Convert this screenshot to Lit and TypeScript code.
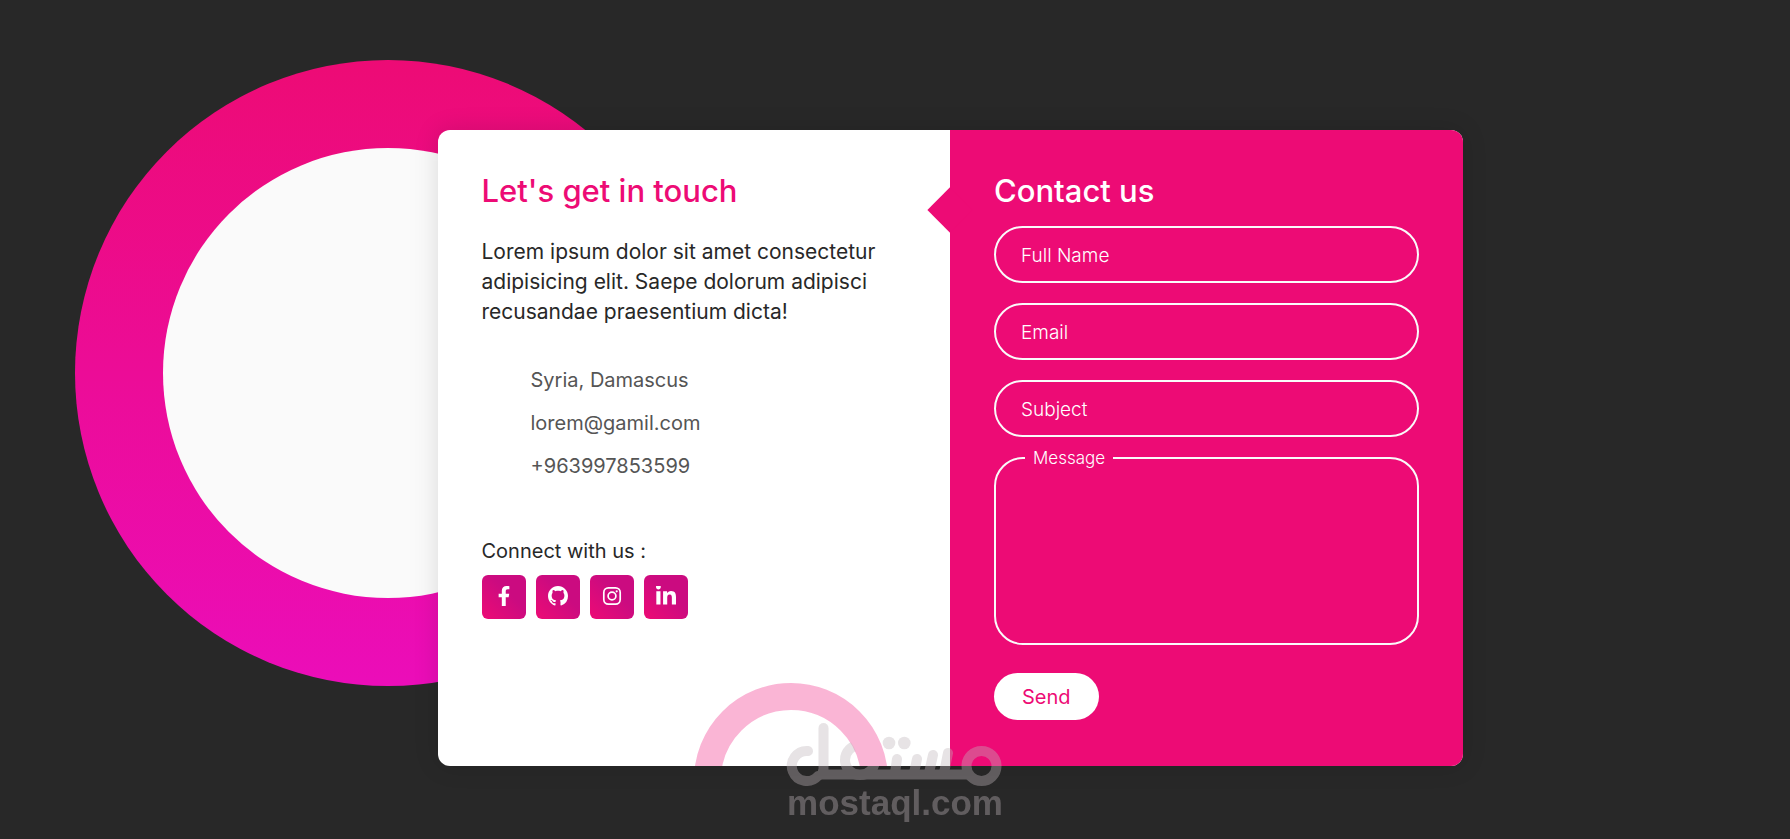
import { LitElement, html, css, svg } from "lit";
import { customElement } from "lit/decorators.js";

const contacts = ["Syria, Damascus", "lorem@gamil.com", "+963997853599"];

const fields = [
  { id: "name", type: "text", label: "Full Name" },
  { id: "email", type: "email", label: "Email" },
  { id: "subject", type: "text", label: "Subject" },
];

const socials = [
  {
    name: "Facebook",
    box: "-96 0 512 512",
    art: svg`<path fill="currentColor" d="M279.14 288l14.22-92.66h-88.91v-60.13c0-25.35 12.42-50.06 52.24-50.06h40.42V6.26S260.43 0 225.36 0c-73.22 0-121.08 44.38-121.08 124.72v70.62H22.89V288h81.39v224h100.17V288z"/>`,
  },
  {
    name: "GitHub",
    box: "0 0 16 16",
    art: svg`<path fill="currentColor" d="M8 0C3.58 0 0 3.58 0 8c0 3.54 2.29 6.53 5.47 7.59.4.07.55-.17.55-.38 0-.19-.01-.82-.01-1.49-2.01.37-2.53-.49-2.69-.94-.09-.23-.48-.94-.82-1.13-.28-.15-.68-.52-.01-.53.63-.01 1.08.58 1.23.82.72 1.21 1.87.87 2.33.66.07-.52.28-.87.51-1.07-1.78-.2-3.64-.89-3.64-3.95 0-.87.31-1.59.82-2.15-.08-.2-.36-1.02.08-2.12 0 0 .67-.21 2.2.82.64-.18 1.32-.27 2-.27.68 0 1.36.09 2 .27 1.53-1.04 2.2-.82 2.2-.82.44 1.1.16 1.92.08 2.12.51.56.82 1.27.82 2.15 0 3.07-1.87 3.75-3.65 3.95.29.25.54.73.54 1.48 0 1.07-.01 1.93-.01 2.2 0 .21.15.46.55.38A8.013 8.013 0 0016 8c0-4.42-3.58-8-8-8z"/>`,
  },
  {
    name: "Instagram",
    box: "0 0 20 20",
    art: svg`<rect x="1.8" y="1.8" width="16.4" height="16.4" rx="4.6" fill="none" stroke="currentColor" stroke-width="1.7"/><circle cx="10" cy="10" r="3.9" fill="none" stroke="currentColor" stroke-width="1.7"/><circle cx="14.7" cy="5.3" r="1.1" fill="currentColor"/>`,
  },
  {
    name: "LinkedIn",
    box: "0 0 448 448",
    art: svg`<path fill="currentColor" d="M100.28 416H7.4V116.9h92.88zM53.79 76.1C24.09 76.1 0 51.5 0 21.8a53.79 53.79 0 0 1 107.58 0c0 29.7-24.1 54.3-53.79 54.3zM447.9 416h-92.68V270.4c0-34.7-.7-79.2-48.29-79.2-48.29 0-55.69 37.7-55.69 76.7V416h-92.78V116.9h89.08v40.8h1.3c12.4-23.5 42.69-48.3 87.88-48.3 94 0 111.28 61.9 111.28 142.3V416z"/>`,
  },
];

@customElement("app-root")
export class AppRoot extends LitElement {
  static styles = css`
    :host {
      display: block;
      --pink: #ed0b75;
      --soft: #fafafa;
      font-family: Inter, sans-serif;
      color: #282828;
    }
    * {
      box-sizing: border-box;
      margin: 0;
      padding: 0;
    }
    .stage {
      position: relative;
      overflow: hidden;
      display: flex;
      align-items: center;
      justify-content: center;
      min-height: 100vh;
      padding: 57px 0 0 110px;
      background: #282828;
    }
    .halo {
      position: absolute;
      left: calc(50% - 820px);
      top: 60px;
      width: 626px;
      height: 626px;
      border-radius: 50%;
      background: linear-gradient(to bottom, #ed0b75, #eb0db9);
    }
    .halo::after {
      content: "";
      position: absolute;
      inset: 88px;
      border-radius: 50%;
      background: var(--soft);
    }
    .card {
      position: relative;
      display: grid;
      grid-template-columns: 1fr 1fr;
      width: 100%;
      max-width: 1025px;
      border-radius: 12px;
      background: #fff;
      box-shadow: 0 0 25px 1px rgba(0, 0, 0, 0.12);
      overflow: hidden;
    }
    .info {
      position: relative;
      padding: 44px;
      overflow: hidden;
    }
    .ring {
      position: absolute;
      right: 62px;
      bottom: -111px;
      width: 194px;
      height: 194px;
      border: 27px solid var(--pink);
      border-radius: 50%;
      opacity: 0.3;
    }
    .title {
      font-size: 31px;
      line-height: 34px;
      font-weight: 500;
    }
    .info .title {
      color: var(--pink);
    }
    .intro {
      margin-top: 29px;
      font-size: 21px;
      line-height: 30px;
      white-space: nowrap;
    }
    .contacts {
      list-style: none;
      margin-top: 32px;
      padding-left: 49px;
      font-size: 20px;
      line-height: 43px;
      color: #555;
    }
    .connect {
      margin-top: 48px;
      font-size: 20px;
      line-height: 30px;
      font-weight: 400;
    }
    .socials {
      display: flex;
      gap: 10px;
      margin-top: 9px;
    }
    .social {
      display: flex;
      align-items: center;
      justify-content: center;
      width: 44px;
      height: 44px;
      padding-bottom: 2px;
      border-radius: 6px;
      color: #fff;
      background: linear-gradient(45deg, #ed0b75, #cb0b80 60%);
    }
    .icon {
      width: 20px;
      height: 20px;
    }
    .form-side {
      position: relative;
      background: var(--pink);
    }
    .form-side::before {
      content: "";
      position: absolute;
      left: -16px;
      top: 64px;
      width: 32px;
      height: 32px;
      background: var(--pink);
      transform: rotate(45deg);
    }
    .form {
      display: flex;
      flex-direction: column;
      align-items: stretch;
      padding: 44px 44px 46px;
      color: #fff;
    }
    .fields {
      display: flex;
      flex-direction: column;
      gap: 20px;
      margin-top: 18px;
    }
    .field {
      position: relative;
      display: flex;
    }
    .control {
      width: 100%;
      height: 57px;
      padding: 0 25px;
      border: 2px solid var(--soft);
      border-radius: 29px;
      outline: none;
      background: none;
      color: #fff;
      font: 400 19px/24px Inter, sans-serif;
    }
    .area {
      height: 188px;
      padding: 16px 25px;
      resize: none;
      overflow: auto;
    }
    .label {
      position: absolute;
      left: 27px;
      top: 18px;
      font-size: 19px;
      font-weight: 300;
      line-height: 24px;
      pointer-events: none;
    }
    .label.raised {
      left: 31px;
      top: -11px;
      padding: 0 8px;
      font-size: 17px;
      background: var(--pink);
    }
    .send {
      align-self: flex-start;
      height: 47px;
      margin-top: 28px;
      padding: 0 28px;
      border: 0;
      border-radius: 24px;
      background: #fff;
      color: var(--pink);
      font: 400 20px/24px Inter, sans-serif;
      cursor: pointer;
    }
    .watermark {
      position: absolute;
      left: calc(50% - 115px);
      bottom: 0;
      width: 230px;
      height: 124px;
      pointer-events: none;
    }
    .wordmark {
      font: 700 35px "Liberation Sans", sans-serif;
    }
  `;

  render() {
    return html`
      <main class="stage">
        <div class="halo"></div>
        <div class="card">
          <section class="info">
            <div class="ring"></div>
            <h3 class="title">Let's get in touch</h3>
            <p class="intro">
              Lorem ipsum dolor sit amet consectetur<br />adipisicing elit. Saepe
              dolorum adipisci<br />recusandae praesentium dicta!
            </p>
            <ul class="contacts">
              ${contacts.map((c) => html`<li>${c}</li>`)}
            </ul>
            <p class="connect">Connect with us :</p>
            <nav class="socials">
              ${socials.map(
                (s) => html`<a class="social" href="#" aria-label=${s.name}
                  ><svg class="icon" viewBox=${s.box}>${s.art}</svg></a
                >`
              )}
            </nav>
          </section>
          <section class="form-side">
            <form class="form">
              <h3 class="title">Contact us</h3>
              <div class="fields">
                ${fields.map(
                  (f) => html`<div class="field">
                    <input class="control" id=${f.id} type=${f.type} />
                    <label class="label" for=${f.id}>${f.label}</label>
                  </div>`
                )}
                <div class="field">
                  <textarea class="control area" id="message"></textarea>
                  <label class="label raised" for="message">Message</label>
                </div>
              </div>
              <button class="send" type="button">Send</button>
            </form>
          </section>
        </div>
        <svg class="watermark" viewBox="0 0 230 124">
          <defs>
            <clipPath id="inside"><rect width="230" height="51" /></clipPath>
            <mask id="behind-ring" maskUnits="userSpaceOnUse" x="0" y="0" width="230" height="124">
              <rect width="230" height="124" fill="#fff" />
              <circle cx="12" cy="65" r="83.5" fill="none" stroke="#000" stroke-width="27" clip-path="url(#inside)" />
            </mask>
          </defs>
          <g mask="url(#behind-ring)">
            <g opacity="0.38">
              <g fill="none" stroke="#bfb6bb" stroke-width="10" stroke-linecap="round">
                <path d="M28 36A15 15 0 1 0 38 61" />
                <path d="M43.500 13V58" />
                <path d="M38 59.500H190" stroke-linecap="butt" />
                <circle cx="80" cy="45" r="15" />
                <path d="M117 44L115 58M137 44L134 58M153 40L149 58M168 38L164 58" />
                <circle cx="201.500" cy="51" r="15" />
              </g>
              <circle cx="109" cy="28" r="6.300" fill="#bfb6bb" />
              <circle cx="124.300" cy="28" r="6.300" fill="#bfb6bb" />
              <text class="wordmark" x="115" y="100" text-anchor="middle" fill="#bfb6bb">mostaql.com</text>
            </g>
          </g>
        </svg>
      </main>
    `;
  }
}
